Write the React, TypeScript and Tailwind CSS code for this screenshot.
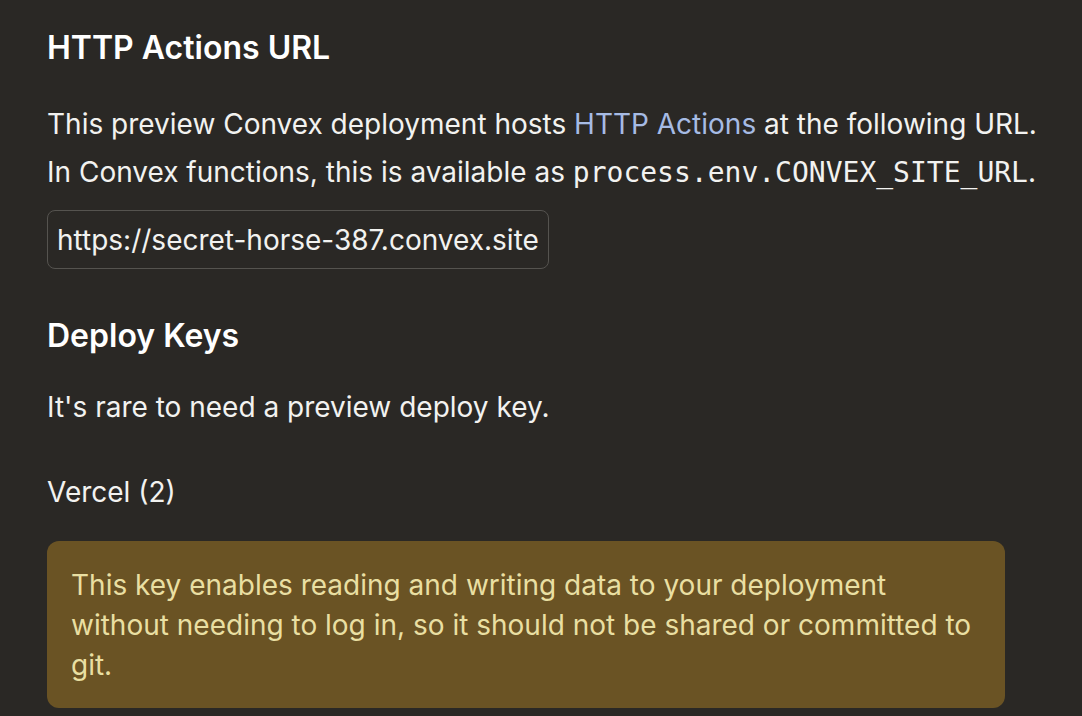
import React from "react";

export default function App() {
  return (
    <div
      className="min-h-[716px] w-full bg-[#2a2825] text-[#f2f2f0]"
      style={{ fontFamily: "Inter, 'Noto Sans', sans-serif" }}
    >
      <div className="pl-[47px] pt-[29px] w-[1005px]">
        <h2 className="text-[32px] leading-[38px] font-semibold text-white">HTTP Actions URL</h2>
        <p className="mt-[33px] text-[28px] leading-[48px] whitespace-nowrap">
          This preview Convex deployment hosts{" "}
          <span className="text-[#a6bbe4]">HTTP Actions</span> at the following URL.
        </p>
        <p className="text-[28px] leading-[48px] whitespace-nowrap">
          In Convex functions, this is available as{" "}
          <code className="font-['DejaVu_Sans_Mono',monospace] text-[28px]">process.env.CONVEX_SITE_URL</code>.
        </p>
        <div className="mt-[13px] w-fit h-[59px] flex items-center px-[9px] rounded-[8px] border border-[#55534f] text-[28px]">
          https://secret-horse-387.convex.site
        </div>
        <h2 className="mt-[48px] text-[32px] leading-[38px] font-semibold text-white">Deploy Keys</h2>
        <p className="mt-[28px] text-[28px] leading-[48px]">It's rare to need a preview deploy key.</p>
        <p className="mt-[37px] text-[28px] leading-[48px]">Vercel (2)</p>
        <div className="mt-[25px] rounded-[12px] bg-[#6a5324] px-6 pt-6 pb-[23px] text-[28px] leading-[40px] text-[#e9dfa2]">
          This key enables reading and writing data to your deployment without needing to log in, so it should not be shared or committed to git.
        </div>
      </div>
    </div>
  );
}
